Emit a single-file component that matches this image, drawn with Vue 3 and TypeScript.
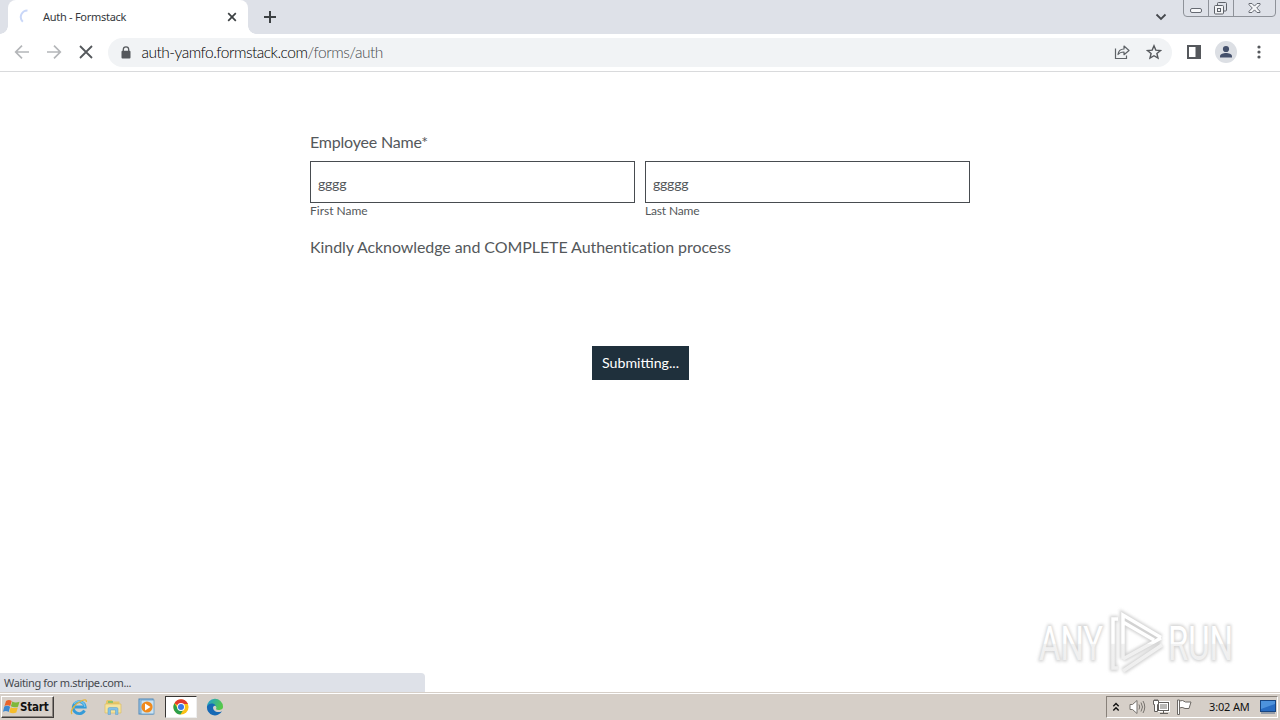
<script setup lang="ts">
interface NameField {
  id: string
  value: string
  caption: string
}

const fields: NameField[] = [
  { id: 'first', value: 'gggg', caption: 'First Name' },
  { id: 'last', value: 'ggggg', caption: 'Last Name' },
]
</script>

<template>
  <div class="screen">
    <header class="tabstrip">
      <div class="tab">
        <svg class="spinner" width="16" height="16" viewBox="0 0 16 16" fill="none">
          <path d="M3.800 12.700A6.600 6.600 0 0 1 8.500 1.400" stroke="#c9d7f8" stroke-width="2" />
        </svg>
        <span class="tab-title">Auth - Formstack</span>
        <svg class="tab-close" width="10" height="10" viewBox="0 0 10 10">
          <path d="M1.200 1.200l7.600 7.600M8.800 1.200L1.200 8.800" stroke="#3c4043" stroke-width="1.700" />
        </svg>
        <i class="flare left"></i>
        <i class="flare right"></i>
      </div>
      <svg class="new-tab" width="14" height="14" viewBox="0 0 14 14">
        <path d="M7 1v12M1 7h12" stroke="#3c4043" stroke-width="2" />
      </svg>
      <svg class="tab-search" width="12" height="8" viewBox="0 0 12 8" fill="none">
        <path d="M1.500 1.500L6 6l4.500-4.500" stroke="#45484d" stroke-width="1.800" />
      </svg>
      <svg class="caption" width="94" height="18" viewBox="0 0 94 18" fill="none">
        <path d="M.5 0v13q0 3.500 3.500 3.500h85q3.500 0 3.500-3.500V0M25.500 0v16M50.500 0v16" stroke="#8e9299" />
        <rect x="7.500" y="8.500" width="11" height="4" rx="1.500" fill="#f6f7f9" stroke="#666a72" />
        <path d="M34.500 5V3.500q0-1 1-1h7q1 0 1 1V10q0 1-1 1H41" stroke="#5e6269" />
        <rect x="31.500" y="5.500" width="9" height="8.500" rx="1" fill="#f3f4f6" stroke="#5e6269" />
        <rect x="34.500" y="8.500" width="3" height="3" stroke="#5e6269" />
        <path d="M66 3.500h3l2.500 2.600L74 3.500h3v1.200L73.700 8l3.300 3.300v1.200h-3L71.500 9.900 69 12.500h-3v-1.200L69.300 8 66 4.700z" fill="#f6f7f9" stroke="#666a72" />
      </svg>
    </header>

    <nav class="toolbar">
      <svg class="nav-icon" width="16" height="16" viewBox="0 0 16 16" fill="none" stroke="#b4b6b9" stroke-width="1.700">
        <path d="M15 8H2M8 1.700L1.700 8 8 14.300" />
      </svg>
      <svg class="nav-icon" width="16" height="16" viewBox="0 0 16 16" fill="none" stroke="#b4b6b9" stroke-width="1.700">
        <path d="M1 8h13M8 1.700L14.300 8 8 14.300" />
      </svg>
      <svg class="nav-icon" width="16" height="16" viewBox="0 0 16 16" fill="none" stroke="#55585c" stroke-width="1.800">
        <path d="M2 2l12 12M14 2L2 14" />
      </svg>
      <div class="omnibox">
        <svg class="lock" width="10" height="13" viewBox="0 0 10 13">
          <path d="M2.300 6V3.500a2.700 2.700 0 0 1 5.400 0V6" fill="none" stroke="#55585c" stroke-width="1.300" />
          <rect x=".5" y="4.800" width="9" height="7.700" rx="1" fill="#55585c" />
        </svg>
        <span class="url">auth-yamfo.formstack.com<span class="path">/forms/auth</span></span>
        <svg class="share" width="16" height="16" viewBox="0 0 16 16" fill="none" stroke="#5f6368" stroke-width="1.200">
          <path d="M1.500 4.500v10h11v-3" />
          <path d="M4 10.500c.4-3.500 2.600-5.400 6-5.500V2l5 4.500-5 4.200V8C7.400 8 5.500 8.600 4 10.500z" stroke-linejoin="round" />
        </svg>
        <svg class="star" width="16" height="16" viewBox="0 0 16 16" fill="none">
          <path d="M8 1.800l1.800 4.300 4.700.4-3.600 3 1.100 4.600L8 11.700l-4 2.400 1.100-4.600-3.600-3 4.700-.4z" stroke="#55585c" stroke-width="1.400" />
        </svg>
      </div>
      <svg class="panel" width="14" height="14" viewBox="0 0 14 14">
        <path d="M0 0h14v14H0zM2 2v10h6.500V2z" fill="#55585c" fill-rule="evenodd" />
      </svg>
      <svg class="avatar" width="22" height="22" viewBox="0 0 22 22">
        <circle cx="11" cy="11" r="11" fill="#dcdfe4" />
        <circle cx="11" cy="8" r="3.100" fill="#44506b" />
        <path d="M5 16.500v-1.300c0-2.200 3.500-3.200 6-3.200s6 1 6 3.200v1.300z" fill="#44506b" />
      </svg>
      <svg class="menu" width="4" height="14" viewBox="0 0 4 14" fill="#55585c">
        <circle cx="2" cy="2" r="1.600" />
        <circle cx="2" cy="7" r="1.600" />
        <circle cx="2" cy="12" r="1.600" />
      </svg>
    </nav>

    <main class="page">
      <form class="form" @submit.prevent>
        <div class="label name-label">Employee Name*</div>
        <div class="row">
          <div v-for="field in fields" :key="field.id" class="field">
            <div class="box">{{ field.value }}</div>
            <div class="hint" :class="field.id">{{ field.caption }}</div>
          </div>
        </div>
        <div class="label notice">Kindly Acknowledge and COMPLETE Authentication process</div>
        <button class="submit" type="submit">Submitting...</button>
      </form>
      <svg class="watermark" width="230" height="80" viewBox="0 0 230 80">
        <defs>
          <filter id="halo" x="-10%" y="-20%" width="120%" height="140%">
            <feGaussianBlur stdDeviation="1.600" />
          </filter>
          <linearGradient id="fade" x1="0" y1="8" x2="0" y2="72" gradientUnits="userSpaceOnUse">
            <stop offset="0" stop-color="#fff" />
            <stop offset=".52" stop-color="#fff" />
            <stop offset=".54" stop-color="#f1f1f1" />
            <stop offset="1" stop-color="#eee" />
          </linearGradient>
        </defs>
        <g class="wm-shadow" filter="url(#halo)">
          <text x="9" y="58" textLength="64" lengthAdjust="spacingAndGlyphs">ANY</text>
          <text x="138" y="58" textLength="65" lengthAdjust="spacingAndGlyphs">RUN</text>
          <path class="wm-line" d="M88 17h-5v49h5M93 57V13l38 22.500M93 20l31 18M93 57l38-21M93 69l39-26" />
        </g>
        <g class="wm-face" fill="url(#fade)" stroke="none">
          <text x="9" y="58" textLength="64" lengthAdjust="spacingAndGlyphs">ANY</text>
          <text x="138" y="58" textLength="65" lengthAdjust="spacingAndGlyphs">RUN</text>
        </g>
        <g fill="none" stroke="url(#fade)" stroke-width="3.500">
          <path d="M88 17h-5v49h5M93 57V13l38 22.500M93 20l31 18M93 57l38-21M93 69l39-26" />
        </g>
      </svg>
      <div class="status">Waiting for m.stripe.com...</div>
    </main>

    <footer class="taskbar">
      <div class="start">
        <svg width="17" height="16" viewBox="0 0 17 16">
          <path d="M3 2Q6 0 8.700 2L7.300 7Q4.500 5.300 1.500 7z" fill="#e8632b" />
          <path d="M9.300 2.500q3 1.700 7.200.2L15 7.700Q11 9.200 7.900 7.300z" fill="#7eb83b" />
          <path d="M1.300 7.600Q4.500 6 7.100 7.800L5.700 13Q3 11.300 0 12.800z" fill="#3c87d0" />
          <path d="M7.700 8.200q3 1.600 7.100.2L13.300 13.600Q9.700 15 6.300 13.300z" fill="#f5bd2c" />
        </svg>
        <span>Start</span>
      </div>
      <div class="quick">
        <svg class="ie" width="18" height="18" viewBox="0 0 18 18" fill="none">
          <path d="M14.500 12.500A6 6 0 1 1 15.200 9H5" stroke="#359bd8" stroke-width="2.800" />
          <path d="M14.800 9A6 6 0 0 0 4 5.700" stroke="#6fc3ed" stroke-width="1.500" />
          <path d="M2 16C-.5 13 5 5.500 12 2.500c3-1.200 4.700-.7 4.300 1.500" stroke="#e3b63f" stroke-width="1.300" />
        </svg>
        <svg class="folder" width="18" height="18" viewBox="0 0 18 18">
          <path d="M2 3.500L3 2h5l1 1.500h6.500V14H2z" fill="#e6c668" />
          <path d="M4 3h5v2H4z" fill="#8fc26a" />
          <path d="M1 6h16v9H1z" fill="#f5e39c" stroke="#d9b95c" stroke-width=".6" />
          <path d="M4 16.500V11q0-1.500 1.500-1.500h7Q14 9.500 14 11v5.500h-2.500V12h-5v4.500z" fill="#83c1e6" stroke="#5a9cc9" stroke-width=".5" />
        </svg>
        <svg class="player" width="18" height="18" viewBox="0 0 18 18">
          <rect x="1" y="1" width="14" height="15" fill="#a8cde9" stroke="#4c87b9" />
          <rect x="3" y="2" width="13" height="14" fill="#cce3f2" stroke="#649bc6" stroke-width=".8" />
          <circle cx="9" cy="9" r="5.600" fill="#f08a1c" />
          <path d="M7 5.600v6.800L12.500 9z" fill="#fff" />
        </svg>
        <div class="active-app">
          <svg width="16" height="16" viewBox="0 0 16 16">
            <circle cx="8" cy="8" r="7.600" fill="#fbc116" />
            <path d="M8 8L1.400 4.200A7.600 7.600 0 0 1 14.600 4.200L15 5H8z" fill="#e33b2e" />
            <path d="M1.400 4.200A7.600 7.600 0 0 0 7.400 15.600L11 9.700 8 8 4.800 9.500z" fill="#2c9f4b" />
            <circle cx="8" cy="8" r="3.900" fill="#fff" />
            <circle cx="8" cy="8" r="3" fill="#3b78e7" />
          </svg>
        </div>
        <svg class="edge" width="18" height="18" viewBox="0 0 18 18">
          <defs>
            <linearGradient id="wave" x1="0" y1="0" x2="1" y2=".4">
              <stop offset="0" stop-color="#1d9bdc" />
              <stop offset="1" stop-color="#55c84a" />
            </linearGradient>
          </defs>
          <path d="M1 9a8 8 0 0 1 16-.5c.2 2.700-2 3.500-4.500 3.500-2 0-3-.7-2.200-1.700C11 8.500 9 7.300 7.500 7.500 4 8 2.500 10 1 9z" fill="url(#wave)" />
          <path d="M1 8.500C2.500 5 7.500 4.500 9.700 7.400 7 7.300 6.200 10 8 12.200c2 2.400 5.500 2.300 8 1A8 8 0 0 1 1 8.500z" fill="#1769b5" />
        </svg>
      </div>
      <div class="tray">
        <svg class="chevrons" width="8" height="10" viewBox="0 0 8 10" fill="none" stroke="#111" stroke-width="1.400">
          <path d="M1.300 4.300L4 1.600l2.700 2.700M1.300 8.500L4 5.800l2.700 2.700" />
        </svg>
        <svg class="speaker" width="17" height="16" viewBox="0 0 17 16" fill="none" stroke="#77736e">
          <path d="M1 5.500h2.500L8 1.500v13L3.500 10.500H1z" fill="#fff" />
          <path d="M10 5.500q1.500 2.500 0 5M12 3.500q3 4.500 0 9M14 2q3.500 6 0 12" />
        </svg>
        <svg class="network" width="17" height="16" viewBox="0 0 17 16" fill="none" stroke="#625f5c">
          <rect x="5.500" y="3.500" width="10" height="8" fill="#b9b8b6" stroke="#fff" stroke-width="3" />
          <rect x="5.500" y="3.500" width="10" height="8" />
          <path d="M7 14.500h8M10.500 12v2" />
          <path d="M.5 1.500h5v4h-1v7h-3v-7h-1zM2 0v1.500M4 0v1.500" fill="#fff" />
        </svg>
        <svg class="flag" width="17" height="16" viewBox="0 0 17 16" fill="#fff" stroke="#6d6965">
          <path d="M1.500 15.500V1h2v14.500zM3.500 2q3-1.500 6 1h5.500L13 9.500H9Q6 7.500 3.500 9z" />
        </svg>
        <span class="clock">3:02 AM</span>
        <svg class="desktop" width="16" height="16" viewBox="0 0 16 16">
          <rect x=".5" y="1.500" width="15" height="11" fill="#286cc2" stroke="#174582" />
          <path d="M1 2h14v3L1 10z" fill="#4d92dc" />
          <path d="M1 14h14" stroke="#526a89" />
        </svg>
      </div>
    </footer>
  </div>
</template>

<style>
body { margin: 0; overflow: hidden; }
</style>

<style scoped>
* { box-sizing: border-box; }
svg { display: block; flex: none; }
.screen {
  width: 1280px; height: 720px; display: flex; flex-direction: column;
  background: #fff; font-family: "Noto Sans", "DejaVu Sans", sans-serif; overflow: hidden;
}
.tabstrip { height: 34px; flex: none; display: flex; background: #dee1e8; padding-left: 8px; }
.tab {
  position: relative; width: 240px; height: 34px; background: #fff; border-radius: 8px 8px 0 0;
  display: flex; align-items: center; padding: 0 11px;
}
.flare { position: absolute; bottom: 0; width: 8px; height: 8px; }
.flare.left { left: -8px; background: radial-gradient(circle at 0 0, #dee1e8 7.5px, #fff 8px); }
.flare.right { right: -8px; background: radial-gradient(circle at 100% 0, #dee1e8 7.5px, #fff 8px); }
.tab-title { margin-left: 8px; padding-bottom: 2px; font-size: 11px; letter-spacing: -0.28px; color: #35383c; white-space: nowrap; }
.tab-close { margin-left: auto; }
.new-tab { margin: 10px 0 0 15px; }
.tab-search { margin: 13px 16px 0 auto; }
.caption { margin-right: 3px; }
.toolbar {
  height: 38px; flex: none; display: flex; align-items: center; padding: 0 20px 1px 14px;
  border-bottom: 1px solid #d9dadc; background: #fff;
}
.nav-icon { margin-right: 16px; }
.omnibox {
  flex: none; width: 1064px; height: 29px; margin-left: -2px; border-radius: 15px; background: #f1f3f5;
  display: flex; align-items: center; padding: 0 10px 0 13px;
}
.url {
  margin-left: 10.5px; font-family: Lato, sans-serif; font-size: 15.5px; line-height: 20px;
  font-weight: 300; letter-spacing: -0.5px; color: #000; white-space: nowrap;
}
.path { color: #484b4f; }
.share { margin-left: auto; }
.star { margin-left: 16px; }
.panel { margin-left: 15px; }
.avatar { margin-left: 14px; }
.menu { margin-left: 19.5px; }
.page { position: relative; flex: 1; min-height: 0; background: #fff; font-family: Lato, sans-serif; }
.form { width: 660px; margin: 0 auto; padding-top: 60px; display: flex; flex-direction: column; color: #54585b; }
.label { font-size: 16px; line-height: 20px; white-space: nowrap; }
.name-label { letter-spacing: -0.2px; }
.row { display: flex; gap: 10px; margin-top: 9px; }
.field { width: 325px; }
.box {
  height: 42px; border: 1px solid #484c50; padding: 3px 7px 0; font-size: 14px;
  line-height: 38px; letter-spacing: -0.2px;
}
.hint { font-size: 12px; line-height: 16px; white-space: nowrap; }
.hint.last { letter-spacing: -0.15px; }
.notice { margin-top: 18px; letter-spacing: -0.08px; }
.submit {
  width: 97px; height: 34px; margin: 89px 0 0 282px; padding: 0 0 2px; border: 0; background: #1f303c;
  color: #fff; font-family: Lato, sans-serif; font-size: 14.2px; white-space: nowrap;
}
.watermark { position: absolute; left: 1030px; top: 530px; }
.watermark text { font-family: Roboto, sans-serif; font-size: 48px; font-weight: 400; }
.wm-shadow { fill: #d2d2d2; stroke: #d2d2d2; stroke-width: 3px; }
.wm-line { fill: none; stroke-width: 6.5px; }
.status {
  position: absolute; left: 0; bottom: 0; width: 425px; height: 19px; background: #dee1e8;
  border-radius: 0 4px 0 0; padding-left: 4px; font-family: "Noto Sans", sans-serif;
  font-size: 11px; line-height: 20px; letter-spacing: -0.36px; color: #45484d; white-space: nowrap;
}
.taskbar {
  height: 28px; flex: none; background: #d6cfc8; border-top: 1px solid #d6cfc8;
  box-shadow: inset 0 1px #fff; display: flex; align-items: center; padding: 1px 2px 0 1px;
}
.start {
  width: 53px; height: 22px; border: 1px solid; border-color: #fff #403d3b #403d3b #fff;
  box-shadow: inset -1px -1px #8b8580; display: flex; align-items: center; padding-left: 1px;
  font: bold 11.5px/20px "DejaVu Sans Condensed", "DejaVu Sans", sans-serif; color: #111;
}
.start span { letter-spacing: -0.2px; }
.quick { display: flex; align-items: center; margin-left: 16px; }
.folder { margin-left: 16px; }
.player { margin-left: 16px; }
.active-app {
  margin-left: 9px; width: 32px; height: 22px; background: #fff; display: flex;
  align-items: center; justify-content: center; border: 1px solid; border-color: #383634 #eee #eee #383634;
}
.edge { margin-left: 9px; }
.tray {
  margin-left: auto; width: 172px; height: 22px; border: 1px solid;
  border-color: #88817a #fff #fff #88817a; display: flex; align-items: center; padding: 0 1px 0 5px;
}
.speaker { margin-left: 9px; }
.network { margin-left: 7px; }
.flag { margin-left: 6px; }
.clock { margin-left: 16px; width: 42px; font-size: 11px; line-height: 20px; letter-spacing: -0.15px; color: #111; white-space: nowrap; }
.desktop { margin-left: auto; }
</style>
